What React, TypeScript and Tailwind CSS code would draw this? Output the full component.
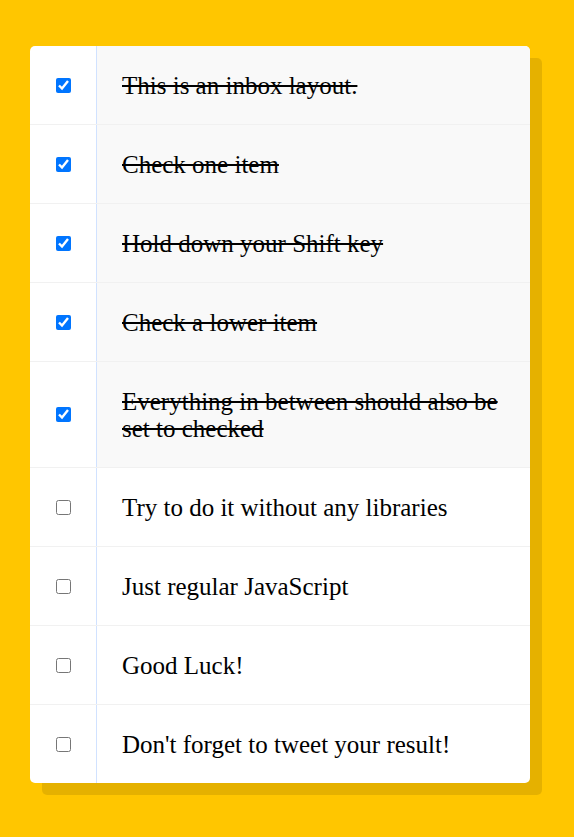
import { useState } from "react"

const initialItems = [
  { text: "This is an inbox layout.", checked: true },
  { text: "Check one item", checked: true },
  { text: "Hold down your Shift key", checked: true },
  { text: "Check a lower item", checked: true },
  { text: "Everything in between should also be set to checked", checked: true },
  { text: "Try to do it without any libraries", checked: false },
  { text: "Just regular JavaScript", checked: false },
  { text: "Good Luck!", checked: false },
  { text: "Don't forget to tweet your result!", checked: false },
]

export default function App() {
  const [items, setItems] = useState(initialItems)

  const toggle = (index: number) => {
    setItems(items.map((item, i) => (i === index ? { ...item, checked: !item.checked } : item)))
  }

  return (
    <div className="min-h-screen bg-[#ffc600] pt-[46px] pb-[41px] font-['Liberation_Serif','Times_New_Roman',serif]">
      <div className="ml-[30px] w-[500px] overflow-hidden rounded-[5px] bg-white shadow-[12px_12px_0_rgba(0,0,0,0.1)]">
        {items.map((item, index) => (
          <div
            key={item.text}
            className="flex border-b border-[#f1f1f1] last:border-b-0"
          >
            {/* Checkbox column */}
            <div className="flex w-[66px] shrink-0 items-center justify-center">
              <input
                type="checkbox"
                checked={item.checked}
                onChange={() => toggle(index)}
                className="m-0 h-[15px] w-[15px]"
              />
            </div>

            <p
              className={`m-0 flex-1 border-l border-[#d1e2ff] px-[25px] py-[25.5px] text-[25px] leading-[27px] text-black ${
                item.checked ? "bg-[#f9f9f9] line-through" : ""
              }`}
            >
              {item.text}
            </p>
          </div>
        ))}
      </div>
    </div>
  )
}
